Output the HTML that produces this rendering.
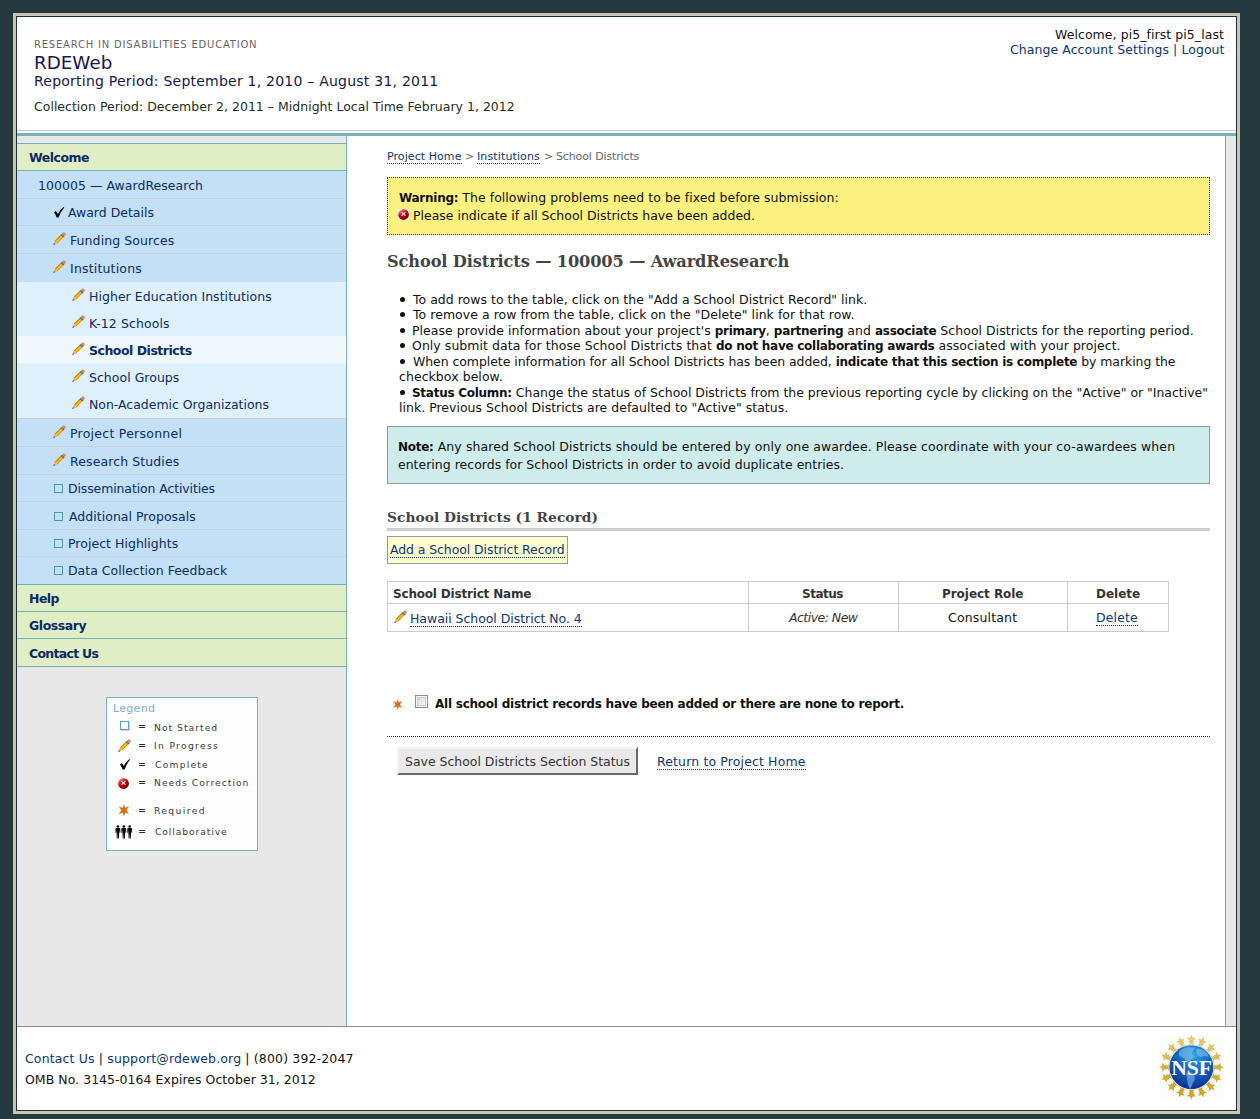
<!DOCTYPE html>
<html lang="en">
<head>
<meta charset="utf-8">
<title>RDEWeb - School Districts</title>
<style>
html,body{margin:0;padding:0;}
body{width:1260px;height:1119px;background:#26393f;position:relative;overflow:hidden;
 font-family:"DejaVu Sans","Liberation Sans",sans-serif;font-size:12.47px;color:#111;}
a{color:#0d3572;text-decoration:none;}
a.d{border-bottom:1px dotted #0d3572;}
b{font-size:12px;letter-spacing:-0.27px;font-weight:bold;}
h1,h2{margin:0;padding:0;}
#frame{position:absolute;left:13px;top:13px;width:1227px;height:1101px;background:#c8c5b0;}
#frame2{position:absolute;left:16px;top:16px;width:1221px;height:1095px;background:#1d2f36;}
#page{position:absolute;left:17px;top:17px;width:1219px;height:1093px;background:#fff;overflow:hidden;}
.abs{position:absolute;white-space:pre;margin:0;}
.ic,.bx{position:absolute;}
#hline{position:absolute;left:0;top:113px;width:1219px;height:1px;background:#c8c6c6;}
#hteal{position:absolute;left:0;top:116px;width:1219px;height:3px;background:#76b2b5;}
#side{position:absolute;left:0;top:119px;width:329px;height:890px;background:#e8e8e8;border-right:1px solid #76b2b5;}
.row{position:absolute;left:0;width:329px;box-sizing:border-box;}
.g{background:#dfeec5;border-bottom:1px solid #76b2b5;}
.bl{background:#c3e0f7;border-bottom:1px solid #c9cfd2;}
.bl.nb{border-bottom:none;}
.bl.tb{border-bottom:1px solid #76b2b5;}
.sb{background:#dff0fd;border-bottom:1px solid #c9cfd2;}
.hl{background:#eef8fd;}
#legend{position:absolute;background:#fdfdfd;border:1px solid #7ab5bd;}
#rbar{position:absolute;left:1208px;top:119px;width:11px;height:890px;background:#e8e8e8;border-left:1px solid #76b2b5;box-sizing:border-box;}
#fline{position:absolute;left:0;top:1009px;width:1219px;height:1px;background:#8a8a8a;}
#btn{background:#e9e9e9;border:2px solid;border-color:#f4f4f4 #6a6a6a #6a6a6a #f4f4f4;}

</style>
</head>
<body>
<div id="frame"></div><div id="frame2"></div>
<div id="page">
<!-- header -->
<div class="abs" style="left:17.00px;top:22.00px;color:#666;font-size:10px;line-height:12px;letter-spacing:0.788px;">RESEARCH IN DISABILITIES EDUCATION</div>
<div class="abs" style="left:17.00px;top:35.00px;color:#16164d;font-size:18.31px;line-height:22px;">RDEWeb</div>
<div class="abs" style="left:17.00px;top:56.00px;color:#16164d;font-size:14px;line-height:17px;letter-spacing:0.229px;">Reporting Period: September 1, 2010 – August 31, 2011</div>
<div class="abs" style="left:17.00px;top:82.00px;color:#1e2e22;font-size:12.47px;line-height:15px;letter-spacing:0.026px;">Collection Period: December 2, 2011 – Midnight Local Time February 1, 2012</div>
<div class="abs" style="left:1038.00px;top:10.00px;color:#111;font-size:12.47px;line-height:15px;letter-spacing:0.077px;">Welcome, pi5_first pi5_last</div>
<div class="abs" style="left:993.00px;top:25.00px;color:#0d3572;font-size:12.47px;line-height:15px;letter-spacing:0.081px;"><a>Change Account Settings</a> | <a>Logout</a></div>
<div id="hline"></div><div id="hteal"></div>
<!-- sidebar -->
<div id="side"></div>
<div class="row" style="top:126px;height:1px;background:#76b2b5"></div>
<div class="row g" style="top:127px;height:27px;"></div>
<div class="row bl" style="top:154px;height:28px;"></div>
<div class="row bl" style="top:182px;height:27px;"></div>
<div class="row bl" style="top:209px;height:28px;"></div>
<div class="row bl nb" style="top:237px;height:28px;"></div>
<div class="row sb" style="top:265px;height:137px;"></div>
<div class="row hl" style="top:319px;height:27px;"></div>
<div class="row bl" style="top:402px;height:28px;"></div>
<div class="row bl" style="top:430px;height:28px;"></div>
<div class="row bl" style="top:458px;height:27px;"></div>
<div class="row bl" style="top:485px;height:28px;"></div>
<div class="row bl" style="top:513px;height:27px;"></div>
<div class="row bl tb" style="top:540px;height:28px;"></div>
<div class="row g" style="top:568px;height:27px;"></div>
<div class="row g" style="top:595px;height:27px;"></div>
<div class="row g" style="top:622px;height:28px;"></div>
<div class="abs" style="left:12.00px;top:133.00px;color:#0b2a63;font-size:12.47px;line-height:15px;font-weight:bold;letter-spacing:-0.500px;">Welcome</div>
<div class="abs" style="left:21.00px;top:161.00px;color:#0b2a63;font-size:12.47px;line-height:15px;letter-spacing:0.052px;">100005 — AwardResearch</div>
<svg class="ic" style="left:37px;top:190px" width="11" height="11" viewBox="0 0 11 11"><path d="M0 5.4 L1.9 4 Q3 5.4 3.8 6.9 Q6 2.5 9.7 0 L10.3 0.6 Q6.8 4.4 4.6 10.4 L2.6 10.4 Q1.8 7.6 0 5.4 Z" fill="#0a0a0a"/></svg>
<div class="abs" style="left:51.00px;top:188.00px;color:#0b2a63;font-size:12.47px;line-height:15px;">Award Details</div>
<svg class="ic" style="left:36px;top:215px" width="14" height="14" viewBox="0 0 14 14"><g transform="translate(0.2,13) rotate(-45)"><path d="M0 0 L4.2 -1.75 L4.2 1.75 Z" fill="#dcae8e"/><path d="M0 0 L2.1 -0.9 L2.1 0.9 Z" fill="#5e5852"/><rect x="4.2" y="-1.75" width="8.4" height="3.5" fill="#ffce14"/><rect x="4.2" y="-1.75" width="8.4" height="1.05" fill="#cc7510"/><rect x="4.2" y="0.75" width="8.4" height="1" fill="#e98f12"/><rect x="12.4" y="-1.75" width="1.8" height="3.5" fill="#2a6485"/><rect x="12.4" y="-0.6" width="1.8" height="1.1" fill="#5b9cc4"/><path d="M14.2 -1.75 L15.6 -1.75 Q16.9 -1.75 16.9 0 Q16.9 1.75 15.6 1.75 L14.2 1.75 Z" fill="#ee8057"/></g></svg>
<div class="abs" style="left:53.00px;top:216.00px;color:#0b2a63;font-size:12.47px;line-height:15px;letter-spacing:0.107px;">Funding Sources</div>
<svg class="ic" style="left:36px;top:243px" width="14" height="14" viewBox="0 0 14 14"><g transform="translate(0.2,13) rotate(-45)"><path d="M0 0 L4.2 -1.75 L4.2 1.75 Z" fill="#dcae8e"/><path d="M0 0 L2.1 -0.9 L2.1 0.9 Z" fill="#5e5852"/><rect x="4.2" y="-1.75" width="8.4" height="3.5" fill="#ffce14"/><rect x="4.2" y="-1.75" width="8.4" height="1.05" fill="#cc7510"/><rect x="4.2" y="0.75" width="8.4" height="1" fill="#e98f12"/><rect x="12.4" y="-1.75" width="1.8" height="3.5" fill="#2a6485"/><rect x="12.4" y="-0.6" width="1.8" height="1.1" fill="#5b9cc4"/><path d="M14.2 -1.75 L15.6 -1.75 Q16.9 -1.75 16.9 0 Q16.9 1.75 15.6 1.75 L14.2 1.75 Z" fill="#ee8057"/></g></svg>
<div class="abs" style="left:53.00px;top:244.00px;color:#0b2a63;font-size:12.47px;line-height:15px;letter-spacing:0.200px;">Institutions</div>
<svg class="ic" style="left:55px;top:271px" width="14" height="14" viewBox="0 0 14 14"><g transform="translate(0.2,13) rotate(-45)"><path d="M0 0 L4.2 -1.75 L4.2 1.75 Z" fill="#dcae8e"/><path d="M0 0 L2.1 -0.9 L2.1 0.9 Z" fill="#5e5852"/><rect x="4.2" y="-1.75" width="8.4" height="3.5" fill="#ffce14"/><rect x="4.2" y="-1.75" width="8.4" height="1.05" fill="#cc7510"/><rect x="4.2" y="0.75" width="8.4" height="1" fill="#e98f12"/><rect x="12.4" y="-1.75" width="1.8" height="3.5" fill="#2a6485"/><rect x="12.4" y="-0.6" width="1.8" height="1.1" fill="#5b9cc4"/><path d="M14.2 -1.75 L15.6 -1.75 Q16.9 -1.75 16.9 0 Q16.9 1.75 15.6 1.75 L14.2 1.75 Z" fill="#ee8057"/></g></svg>
<div class="abs" style="left:72.00px;top:272.00px;color:#0b2a63;font-size:12.47px;line-height:15px;letter-spacing:0.057px;">Higher Education Institutions</div>
<svg class="ic" style="left:55px;top:298px" width="14" height="14" viewBox="0 0 14 14"><g transform="translate(0.2,13) rotate(-45)"><path d="M0 0 L4.2 -1.75 L4.2 1.75 Z" fill="#dcae8e"/><path d="M0 0 L2.1 -0.9 L2.1 0.9 Z" fill="#5e5852"/><rect x="4.2" y="-1.75" width="8.4" height="3.5" fill="#ffce14"/><rect x="4.2" y="-1.75" width="8.4" height="1.05" fill="#cc7510"/><rect x="4.2" y="0.75" width="8.4" height="1" fill="#e98f12"/><rect x="12.4" y="-1.75" width="1.8" height="3.5" fill="#2a6485"/><rect x="12.4" y="-0.6" width="1.8" height="1.1" fill="#5b9cc4"/><path d="M14.2 -1.75 L15.6 -1.75 Q16.9 -1.75 16.9 0 Q16.9 1.75 15.6 1.75 L14.2 1.75 Z" fill="#ee8057"/></g></svg>
<div class="abs" style="left:72.00px;top:299.00px;color:#0b2a63;font-size:12.47px;line-height:15px;letter-spacing:0.136px;">K-12 Schools</div>
<svg class="ic" style="left:55px;top:325px" width="14" height="14" viewBox="0 0 14 14"><g transform="translate(0.2,13) rotate(-45)"><path d="M0 0 L4.2 -1.75 L4.2 1.75 Z" fill="#dcae8e"/><path d="M0 0 L2.1 -0.9 L2.1 0.9 Z" fill="#5e5852"/><rect x="4.2" y="-1.75" width="8.4" height="3.5" fill="#ffce14"/><rect x="4.2" y="-1.75" width="8.4" height="1.05" fill="#cc7510"/><rect x="4.2" y="0.75" width="8.4" height="1" fill="#e98f12"/><rect x="12.4" y="-1.75" width="1.8" height="3.5" fill="#2a6485"/><rect x="12.4" y="-0.6" width="1.8" height="1.1" fill="#5b9cc4"/><path d="M14.2 -1.75 L15.6 -1.75 Q16.9 -1.75 16.9 0 Q16.9 1.75 15.6 1.75 L14.2 1.75 Z" fill="#ee8057"/></g></svg>
<div class="abs" style="left:72.00px;top:326.00px;color:#0b2a63;font-size:12.47px;line-height:15px;font-weight:bold;letter-spacing:-0.467px;">School Districts</div>
<svg class="ic" style="left:55px;top:352px" width="14" height="14" viewBox="0 0 14 14"><g transform="translate(0.2,13) rotate(-45)"><path d="M0 0 L4.2 -1.75 L4.2 1.75 Z" fill="#dcae8e"/><path d="M0 0 L2.1 -0.9 L2.1 0.9 Z" fill="#5e5852"/><rect x="4.2" y="-1.75" width="8.4" height="3.5" fill="#ffce14"/><rect x="4.2" y="-1.75" width="8.4" height="1.05" fill="#cc7510"/><rect x="4.2" y="0.75" width="8.4" height="1" fill="#e98f12"/><rect x="12.4" y="-1.75" width="1.8" height="3.5" fill="#2a6485"/><rect x="12.4" y="-0.6" width="1.8" height="1.1" fill="#5b9cc4"/><path d="M14.2 -1.75 L15.6 -1.75 Q16.9 -1.75 16.9 0 Q16.9 1.75 15.6 1.75 L14.2 1.75 Z" fill="#ee8057"/></g></svg>
<div class="abs" style="left:72.00px;top:353.00px;color:#0b2a63;font-size:12.47px;line-height:15px;letter-spacing:0.042px;">School Groups</div>
<svg class="ic" style="left:55px;top:379px" width="14" height="14" viewBox="0 0 14 14"><g transform="translate(0.2,13) rotate(-45)"><path d="M0 0 L4.2 -1.75 L4.2 1.75 Z" fill="#dcae8e"/><path d="M0 0 L2.1 -0.9 L2.1 0.9 Z" fill="#5e5852"/><rect x="4.2" y="-1.75" width="8.4" height="3.5" fill="#ffce14"/><rect x="4.2" y="-1.75" width="8.4" height="1.05" fill="#cc7510"/><rect x="4.2" y="0.75" width="8.4" height="1" fill="#e98f12"/><rect x="12.4" y="-1.75" width="1.8" height="3.5" fill="#2a6485"/><rect x="12.4" y="-0.6" width="1.8" height="1.1" fill="#5b9cc4"/><path d="M14.2 -1.75 L15.6 -1.75 Q16.9 -1.75 16.9 0 Q16.9 1.75 15.6 1.75 L14.2 1.75 Z" fill="#ee8057"/></g></svg>
<div class="abs" style="left:72.00px;top:380.00px;color:#0b2a63;font-size:12.47px;line-height:15px;letter-spacing:-0.008px;">Non-Academic Organizations</div>
<svg class="ic" style="left:36px;top:408px" width="14" height="14" viewBox="0 0 14 14"><g transform="translate(0.2,13) rotate(-45)"><path d="M0 0 L4.2 -1.75 L4.2 1.75 Z" fill="#dcae8e"/><path d="M0 0 L2.1 -0.9 L2.1 0.9 Z" fill="#5e5852"/><rect x="4.2" y="-1.75" width="8.4" height="3.5" fill="#ffce14"/><rect x="4.2" y="-1.75" width="8.4" height="1.05" fill="#cc7510"/><rect x="4.2" y="0.75" width="8.4" height="1" fill="#e98f12"/><rect x="12.4" y="-1.75" width="1.8" height="3.5" fill="#2a6485"/><rect x="12.4" y="-0.6" width="1.8" height="1.1" fill="#5b9cc4"/><path d="M14.2 -1.75 L15.6 -1.75 Q16.9 -1.75 16.9 0 Q16.9 1.75 15.6 1.75 L14.2 1.75 Z" fill="#ee8057"/></g></svg>
<div class="abs" style="left:53.00px;top:409.00px;color:#0b2a63;font-size:12.47px;line-height:15px;letter-spacing:0.275px;">Project Personnel</div>
<svg class="ic" style="left:36px;top:436px" width="14" height="14" viewBox="0 0 14 14"><g transform="translate(0.2,13) rotate(-45)"><path d="M0 0 L4.2 -1.75 L4.2 1.75 Z" fill="#dcae8e"/><path d="M0 0 L2.1 -0.9 L2.1 0.9 Z" fill="#5e5852"/><rect x="4.2" y="-1.75" width="8.4" height="3.5" fill="#ffce14"/><rect x="4.2" y="-1.75" width="8.4" height="1.05" fill="#cc7510"/><rect x="4.2" y="0.75" width="8.4" height="1" fill="#e98f12"/><rect x="12.4" y="-1.75" width="1.8" height="3.5" fill="#2a6485"/><rect x="12.4" y="-0.6" width="1.8" height="1.1" fill="#5b9cc4"/><path d="M14.2 -1.75 L15.6 -1.75 Q16.9 -1.75 16.9 0 Q16.9 1.75 15.6 1.75 L14.2 1.75 Z" fill="#ee8057"/></g></svg>
<div class="abs" style="left:53.00px;top:437.00px;color:#0b2a63;font-size:12.47px;line-height:15px;letter-spacing:0.120px;">Research Studies</div>
<div class="ic" style="left:37px;top:467px;width:7px;height:7px;border:1px solid #4c9aa0;"></div>
<div class="abs" style="left:51.00px;top:464.00px;color:#0b2a63;font-size:12.47px;line-height:15px;letter-spacing:-0.109px;">Dissemination Activities</div>
<div class="ic" style="left:37px;top:495px;width:7px;height:7px;border:1px solid #4c9aa0;"></div>
<div class="abs" style="left:52.00px;top:492.00px;color:#0b2a63;font-size:12.47px;line-height:15px;letter-spacing:0.042px;">Additional Proposals</div>
<div class="ic" style="left:37px;top:522px;width:7px;height:7px;border:1px solid #4c9aa0;"></div>
<div class="abs" style="left:51.00px;top:519.00px;color:#0b2a63;font-size:12.47px;line-height:15px;letter-spacing:0.047px;">Project Highlights</div>
<div class="ic" style="left:37px;top:549px;width:7px;height:7px;border:1px solid #4c9aa0;"></div>
<div class="abs" style="left:51.00px;top:546.00px;color:#0b2a63;font-size:12.47px;line-height:15px;letter-spacing:0.017px;">Data Collection Feedback</div>
<div class="abs" style="left:12.00px;top:574.00px;color:#0b2a63;font-size:12.47px;line-height:15px;font-weight:bold;letter-spacing:-0.533px;">Help</div>
<div class="abs" style="left:12.00px;top:601.00px;color:#0b2a63;font-size:12.47px;line-height:15px;font-weight:bold;letter-spacing:-0.429px;">Glossary</div>
<div class="abs" style="left:12.00px;top:629.00px;color:#0b2a63;font-size:12.47px;line-height:15px;font-weight:bold;letter-spacing:-0.700px;">Contact Us</div>
<div id="legend" style="left:89px;top:680px;width:150px;height:152px"></div>
<div class="abs" style="left:96.00px;top:685.00px;color:#7fb1d1;font-size:11px;line-height:13px;letter-spacing:0.300px;">Legend</div>
<div class="ic" style="left:103px;top:704px;width:7px;height:7px;border:1px solid #5aa0b8;box-shadow:1px 1px 0 #d4d4d4"></div>
<svg class="ic" style="left:101px;top:722px" width="14" height="14" viewBox="0 0 14 14"><g transform="translate(0.2,13) rotate(-45)"><path d="M0 0 L4.2 -1.75 L4.2 1.75 Z" fill="#dcae8e"/><path d="M0 0 L2.1 -0.9 L2.1 0.9 Z" fill="#5e5852"/><rect x="4.2" y="-1.75" width="8.4" height="3.5" fill="#ffce14"/><rect x="4.2" y="-1.75" width="8.4" height="1.05" fill="#cc7510"/><rect x="4.2" y="0.75" width="8.4" height="1" fill="#e98f12"/><rect x="12.4" y="-1.75" width="1.8" height="3.5" fill="#2a6485"/><rect x="12.4" y="-0.6" width="1.8" height="1.1" fill="#5b9cc4"/><path d="M14.2 -1.75 L15.6 -1.75 Q16.9 -1.75 16.9 0 Q16.9 1.75 15.6 1.75 L14.2 1.75 Z" fill="#ee8057"/></g></svg>
<svg class="ic" style="left:102.5px;top:742px" width="11" height="11" viewBox="0 0 11 11"><path d="M0 5.4 L1.9 4 Q3 5.4 3.8 6.9 Q6 2.5 9.7 0 L10.3 0.6 Q6.8 4.4 4.6 10.4 L2.6 10.4 Q1.8 7.6 0 5.4 Z" fill="#0a0a0a"/></svg>
<svg class="ic" style="left:101px;top:761px" width="11" height="11" viewBox="0 0 11 11"><defs><linearGradient id="eg1" x1="0.15" y1="0.1" x2="0.8" y2="0.95"><stop offset="0" stop-color="#ee8f9a"/><stop offset="0.4" stop-color="#d00606"/><stop offset="0.7" stop-color="#a80000"/><stop offset="1" stop-color="#3c0000"/></linearGradient></defs><rect width="11" height="11" fill="#fdfdfd"/><circle cx="5.5" cy="5.5" r="5.4" fill="url(#eg1)"/><path d="M3.9 3.3 L7.1 6.3 M7.1 3.3 L3.9 6.3" stroke="#f6e4e4" stroke-width="1.15" stroke-linecap="round"/></svg>
<svg class="ic" style="left:100.5px;top:787.3px" width="11.8" height="12.6" viewBox="0 0 10 11.6"><path d="M5 0 L6.1 3.7 L9.9 2 L7.3 5.8 L9.9 9.4 L6.1 7.9 L5 11.6 L3.9 7.9 L0.1 9.4 L2.7 5.8 L0.1 2 L3.9 3.7 Z" fill="#e06c0c"/></svg>
<svg class="ic" style="left:98px;top:808px" width="18" height="14" viewBox="0 0 18 14"><g fill="#0a0a0a"><g id="pp"><circle cx="2.9" cy="1.5" r="1.3"/><path d="M0.5 3.9 Q0.5 3.1 1.3 3.1 L4.5 3.1 Q5.3 3.1 5.3 3.9 L5.3 7.8 L4.6 7.8 L4.4 4.6 L4.2 8.2 L3.95 13.5 L3.1 13.5 L2.95 8.6 L2.85 8.6 L2.7 13.5 L1.85 13.5 L1.6 8.2 L1.4 4.6 L1.2 7.8 L0.5 7.8 Z"/></g><use href="#pp" x="5.9"/><use href="#pp" x="11.8"/></g></svg>
<div class="abs" style="left:121.00px;top:704.00px;color:#2a2a2a;font-size:9.6px;line-height:12px;">=</div>
<div class="abs" style="left:137.00px;top:705.00px;color:#3c3c3c;font-size:9.2px;line-height:11px;letter-spacing:1.020px;">Not Started</div>
<div class="abs" style="left:121.00px;top:723.00px;color:#2a2a2a;font-size:9.6px;line-height:12px;">=</div>
<div class="abs" style="left:137.00px;top:723.00px;color:#3c3c3c;font-size:9.2px;line-height:11px;letter-spacing:1.320px;">In Progress</div>
<div class="abs" style="left:121.00px;top:742.00px;color:#2a2a2a;font-size:9.6px;line-height:12px;">=</div>
<div class="abs" style="left:138.00px;top:742.00px;color:#3c3c3c;font-size:9.2px;line-height:11px;letter-spacing:1.214px;">Complete</div>
<div class="abs" style="left:121.00px;top:760.00px;color:#2a2a2a;font-size:9.6px;line-height:12px;">=</div>
<div class="abs" style="left:137.00px;top:760.00px;color:#3c3c3c;font-size:9.2px;line-height:11px;letter-spacing:1.013px;">Needs Correction</div>
<div class="abs" style="left:121.00px;top:788.00px;color:#2a2a2a;font-size:9.6px;line-height:12px;">=</div>
<div class="abs" style="left:137.00px;top:788.00px;color:#3c3c3c;font-size:9.2px;line-height:11px;letter-spacing:1.371px;">Required</div>
<div class="abs" style="left:121.00px;top:809.00px;color:#2a2a2a;font-size:9.6px;line-height:12px;">=</div>
<div class="abs" style="left:138.00px;top:809.00px;color:#3c3c3c;font-size:9.2px;line-height:11px;letter-spacing:0.900px;">Collaborative</div>
<!-- content -->
<div id="rbar"></div>
<div class="abs" style="left:370.00px;top:133.00px;color:#0d3572;font-size:11px;line-height:13px;letter-spacing:0.073px;"><a class="d">Project Home</a></div>
<div class="abs" style="left:448.00px;top:133.00px;color:#666;font-size:11px;line-height:13px;">&gt;</div>
<div class="abs" style="left:460.00px;top:133.00px;color:#0d3572;font-size:11px;line-height:13px;letter-spacing:0.127px;"><a class="d">Institutions</a></div>
<div class="abs" style="left:527.00px;top:133.00px;color:#666;font-size:11px;line-height:13px;">&gt;</div>
<div class="abs" style="left:539.00px;top:133.00px;color:#666;font-size:11px;line-height:13px;letter-spacing:-0.127px;">School Districts</div>
<div class="bx" style="left:370px;top:160px;width:821px;height:56px;background:#fdf17f;border:1px dotted #333"></div>
<div class="abs" style="left:382.00px;top:173.00px;color:#111;font-size:12.47px;line-height:15px;letter-spacing:0.060px;"><b>Warning:</b> The following problems need to be fixed before submission:</div>
<svg class="ic" style="left:381px;top:192px" width="11" height="11" viewBox="0 0 11 11"><defs><linearGradient id="eg2" x1="0.15" y1="0.1" x2="0.8" y2="0.95"><stop offset="0" stop-color="#ee8f9a"/><stop offset="0.4" stop-color="#d00606"/><stop offset="0.7" stop-color="#a80000"/><stop offset="1" stop-color="#3c0000"/></linearGradient></defs><rect width="11" height="11" fill="#fff"/><circle cx="5.5" cy="5.5" r="5.4" fill="url(#eg2)"/><path d="M3.9 3.3 L7.1 6.3 M7.1 3.3 L3.9 6.3" stroke="#f6e4e4" stroke-width="1.15" stroke-linecap="round"/></svg>
<div class="abs" style="left:396.00px;top:191.00px;color:#111;font-size:12.47px;line-height:15px;letter-spacing:0.002px;">Please indicate if all School Districts have been added.</div>
<h1 class="abs" style="left:370.00px;top:235.00px;color:#444;font-family:'DejaVu Serif','Liberation Serif',serif;font-size:16.2px;line-height:19px;font-weight:bold;letter-spacing:-0.120px;">School Districts — 100005 — AwardResearch</h1>
<div class="ic" style="left:382.5px;top:280px;width:5px;height:5px;border-radius:50%;background:#111"></div>
<div class="abs" style="left:396.00px;top:275.00px;color:#111;font-size:12.47px;line-height:15px;letter-spacing:0.028px;">To add rows to the table, click on the &quot;Add a School District Record&quot; link.</div>
<div class="ic" style="left:382.5px;top:295px;width:5px;height:5px;border-radius:50%;background:#111"></div>
<div class="abs" style="left:396.00px;top:290.00px;color:#111;font-size:12.47px;line-height:15px;letter-spacing:0.054px;">To remove a row from the table, click on the &quot;Delete&quot; link for that row.</div>
<div class="ic" style="left:382.5px;top:311px;width:5px;height:5px;border-radius:50%;background:#111"></div>
<div class="abs" style="left:395.00px;top:306.00px;color:#111;font-size:12.47px;line-height:15px;letter-spacing:0.051px;">Please provide information about your project's <b>primary</b>, <b>partnering</b> and <b>associate</b> School Districts for the reporting period.</div>
<div class="ic" style="left:382.5px;top:326px;width:5px;height:5px;border-radius:50%;background:#111"></div>
<div class="abs" style="left:395.00px;top:321.00px;color:#111;font-size:12.47px;line-height:15px;letter-spacing:0.063px;">Only submit data for those School Districts that <b>do not have collaborating awards</b> associated with your project.</div>
<div class="ic" style="left:382.5px;top:342px;width:5px;height:5px;border-radius:50%;background:#111"></div>
<div class="abs" style="left:396.00px;top:337.00px;color:#111;font-size:12.47px;line-height:15px;letter-spacing:-0.054px;">When complete information for all School Districts has been added, <b>indicate that this section is complete</b> by marking the</div>
<div class="abs" style="left:382.00px;top:352.00px;color:#111;font-size:12.47px;line-height:15px;letter-spacing:0.071px;">checkbox below.</div>
<div class="ic" style="left:382.5px;top:373px;width:5px;height:5px;border-radius:50%;background:#111"></div>
<div class="abs" style="left:395.00px;top:368.00px;color:#111;font-size:12.47px;line-height:15px;letter-spacing:-0.009px;"><b>Status Column:</b> Change the status of School Districts from the previous reporting cycle by clicking on the &quot;Active&quot; or &quot;Inactive&quot;</div>
<div class="abs" style="left:382.00px;top:383.00px;color:#111;font-size:12.47px;line-height:15px;letter-spacing:0.025px;">link. Previous School Districts are defaulted to &quot;Active&quot; status.</div>
<div class="bx" style="left:370px;top:409px;width:821px;height:56px;background:#cdeceb;border:1px solid #999"></div>
<div class="abs" style="left:381.00px;top:422.00px;color:#111;font-size:12.47px;line-height:15px;letter-spacing:0.114px;"><b>Note:</b> Any shared School Districts should be entered by only one awardee. Please coordinate with your co-awardees when</div>
<div class="abs" style="left:381.00px;top:440.00px;color:#111;font-size:12.47px;line-height:15px;letter-spacing:0.022px;">entering records for School Districts in order to avoid duplicate entries.</div>
<h2 class="abs" style="left:370.00px;top:492.00px;color:#444;font-family:'DejaVu Serif','Liberation Serif',serif;font-size:13.8px;line-height:17px;font-weight:bold;letter-spacing:0.031px;">School Districts (1 Record)</h2>
<div class="bx" style="left:370px;top:511px;width:823px;height:3px;background:#ccc"></div>
<div class="bx" style="left:370px;top:519px;width:179px;height:26px;background:#ffffd2;border:1px solid #999"></div>
<div class="abs" style="left:373.00px;top:525.00px;color:#0d3572;font-size:12.47px;line-height:15px;letter-spacing:-0.078px;"><a class="d">Add a School District Record</a></div>
<div class="bx" style="left:370px;top:564px;width:780px;height:49px;border:1px solid #ccc;background:#fff"></div>
<div class="bx" style="left:371px;top:586px;width:780px;height:1px;background:#ccc"></div>
<div class="bx" style="left:731px;top:565px;width:1px;height:49px;background:#ccc"></div>
<div class="bx" style="left:881px;top:565px;width:1px;height:49px;background:#ccc"></div>
<div class="bx" style="left:1050px;top:565px;width:1px;height:49px;background:#ccc"></div>
<div class="abs" style="left:376.00px;top:570.00px;color:#333;font-size:12px;line-height:14px;font-weight:bold;letter-spacing:-0.184px;">School District Name</div>
<div class="abs" style="left:785.00px;top:570.00px;color:#333;font-size:12px;line-height:14px;font-weight:bold;letter-spacing:-0.500px;">Status</div>
<div class="abs" style="left:925.00px;top:570.00px;color:#333;font-size:12px;line-height:14px;font-weight:bold;letter-spacing:-0.045px;">Project Role</div>
<div class="abs" style="left:1079.00px;top:570.00px;color:#333;font-size:12px;line-height:14px;font-weight:bold;">Delete</div>
<svg class="ic" style="left:376.5px;top:593px" width="14" height="14" viewBox="0 0 14 14"><g transform="translate(0.2,13) rotate(-45)"><path d="M0 0 L4.2 -1.75 L4.2 1.75 Z" fill="#dcae8e"/><path d="M0 0 L2.1 -0.9 L2.1 0.9 Z" fill="#5e5852"/><rect x="4.2" y="-1.75" width="8.4" height="3.5" fill="#ffce14"/><rect x="4.2" y="-1.75" width="8.4" height="1.05" fill="#cc7510"/><rect x="4.2" y="0.75" width="8.4" height="1" fill="#e98f12"/><rect x="12.4" y="-1.75" width="1.8" height="3.5" fill="#2a6485"/><rect x="12.4" y="-0.6" width="1.8" height="1.1" fill="#5b9cc4"/><path d="M14.2 -1.75 L15.6 -1.75 Q16.9 -1.75 16.9 0 Q16.9 1.75 15.6 1.75 L14.2 1.75 Z" fill="#ee8057"/></g></svg>
<div class="abs" style="left:393.00px;top:594.00px;color:#0d3572;font-size:12.47px;line-height:15px;letter-spacing:-0.026px;"><a class="d">Hawaii School District No. 4</a></div>
<div class="abs" style="left:772.00px;top:593.00px;color:#333;font-size:12.47px;line-height:15px;font-style:italic;letter-spacing:-0.510px;">Active: New</div>
<div class="abs" style="left:931.00px;top:593.00px;color:#111;font-size:12.47px;line-height:15px;letter-spacing:0.178px;">Consultant</div>
<div class="abs" style="left:1079.00px;top:593.00px;color:#0d3572;font-size:12.47px;line-height:15px;letter-spacing:0.160px;"><a class="d">Delete</a></div>
<svg class="ic" style="left:376px;top:682px" width="9.4" height="10.9" viewBox="0 0 10 11.6"><path d="M5 0 L6.1 3.7 L9.9 2 L7.3 5.8 L9.9 9.4 L6.1 7.9 L5 11.6 L3.9 7.9 L0.1 9.4 L2.7 5.8 L0.1 2 L3.9 3.7 Z" fill="#e06c0c"/></svg>
<div class="bx" style="left:398px;top:678px;width:11px;height:11px;border:1px solid #8a8e8e;background:#fff"><div style="position:absolute;left:1px;top:1px;width:7px;height:7px;border:1px solid #c6cad0;background:linear-gradient(135deg,#d3d7dd,#fbfbfb)"></div></div>
<div class="abs" style="left:418.00px;top:680.00px;color:#111;font-size:12px;line-height:14px;font-weight:bold;letter-spacing:-0.235px;">All school district records have been added or there are none to report.</div>
<div class="bx" style="left:370px;top:719px;width:823px;height:0;border-top:1px dotted #333"></div>
<div class="bx" id="btn" style="left:380px;top:730px;width:237px;height:24px"></div>
<div class="abs" style="left:388.00px;top:737.00px;color:#333;font-size:12.47px;line-height:15px;letter-spacing:-0.006px;">Save School Districts Section Status</div>
<div class="abs" style="left:640.00px;top:737.00px;color:#0d3572;font-size:12.47px;line-height:15px;letter-spacing:0.148px;"><a class="d">Return to Project Home</a></div>
<!-- footer -->
<div id="fline"></div>
<div class="abs" style="left:8.00px;top:1034.00px;color:#111;font-size:12.47px;line-height:15px;letter-spacing:0.160px;"><a>Contact Us</a> | <a>support@rdeweb.org</a> | (800) 392-2047</div>
<div class="abs" style="left:8.00px;top:1055.00px;color:#111;font-size:12.47px;line-height:15px;letter-spacing:0.049px;">OMB No. 3145-0164 Expires October 31, 2012</div>
<svg class="ic" style="left:1142px;top:1018px" width="65" height="65" viewBox="0 0 65 65"><defs><radialGradient id="gl" cx="55%" cy="22%" r="80%"><stop offset="0" stop-color="#27a9e4"/><stop offset="0.45" stop-color="#1668c4"/><stop offset="1" stop-color="#0a2f8e"/></radialGradient><linearGradient id="gd" x1="0" y1="0" x2="0" y2="1"><stop offset="0" stop-color="#e3cc7c"/><stop offset="0.5" stop-color="#d2b347"/><stop offset="1" stop-color="#c7a326"/></linearGradient></defs><rect width="65" height="65" fill="#fbfbf7"/><circle cx="32.4" cy="32.2" r="24.4" fill="none" stroke="url(#gd)" stroke-width="3.4"/><path d="M32.40,-0.40 L33.69,2.82 L37.16,3.05 L34.49,5.28 L35.34,8.65 L32.40,6.80 L29.46,8.65 L30.31,5.28 L27.64,3.05 L31.11,2.82Z M44.88,2.08 L44.84,5.55 L47.95,7.09 L44.63,8.13 L44.13,11.56 L42.12,8.73 L38.70,9.31 L40.77,6.53 L39.16,3.45 L42.45,4.56Z M55.45,9.15 L54.09,12.34 L56.37,14.95 L52.91,14.64 L51.13,17.62 L50.36,14.24 L46.98,13.47 L49.96,11.69 L49.65,8.23 L52.26,10.51Z M62.52,19.72 L60.04,22.15 L61.15,25.44 L58.07,23.83 L55.29,25.90 L55.87,22.48 L53.04,20.47 L56.47,19.97 L57.51,16.65 L59.05,19.76Z M65.00,32.20 L61.78,33.49 L61.55,36.96 L59.32,34.29 L55.95,35.14 L57.80,32.20 L55.95,29.26 L59.32,30.11 L61.55,27.44 L61.78,30.91Z M62.52,44.68 L59.05,44.64 L57.51,47.75 L56.47,44.43 L53.04,43.93 L55.87,41.92 L55.29,38.50 L58.07,40.57 L61.15,38.96 L60.04,42.25Z M55.45,55.25 L52.26,53.89 L49.65,56.17 L49.96,52.71 L46.98,50.93 L50.36,50.16 L51.13,46.78 L52.91,49.76 L56.37,49.45 L54.09,52.06Z M44.88,62.32 L42.45,59.84 L39.16,60.95 L40.77,57.87 L38.70,55.09 L42.12,55.67 L44.13,52.84 L44.63,56.27 L47.95,57.31 L44.84,58.85Z M32.40,64.80 L31.11,61.58 L27.64,61.35 L30.31,59.12 L29.46,55.75 L32.40,57.60 L35.34,55.75 L34.49,59.12 L37.16,61.35 L33.69,61.58Z M19.92,62.32 L19.96,58.85 L16.85,57.31 L20.17,56.27 L20.67,52.84 L22.68,55.67 L26.10,55.09 L24.03,57.87 L25.64,60.95 L22.35,59.84Z M9.35,55.25 L10.71,52.06 L8.43,49.45 L11.89,49.76 L13.67,46.78 L14.44,50.16 L17.82,50.93 L14.84,52.71 L15.15,56.17 L12.54,53.89Z M2.28,44.68 L4.76,42.25 L3.65,38.96 L6.73,40.57 L9.51,38.50 L8.93,41.92 L11.76,43.93 L8.33,44.43 L7.29,47.75 L5.75,44.64Z M-0.20,32.20 L3.02,30.91 L3.25,27.44 L5.48,30.11 L8.85,29.26 L7.00,32.20 L8.85,35.14 L5.48,34.29 L3.25,36.96 L3.02,33.49Z M2.28,19.72 L5.75,19.76 L7.29,16.65 L8.33,19.97 L11.76,20.47 L8.93,22.48 L9.51,25.90 L6.73,23.83 L3.65,25.44 L4.76,22.15Z M9.35,9.15 L12.54,10.51 L15.15,8.23 L14.84,11.69 L17.82,13.47 L14.44,14.24 L13.67,17.62 L11.89,14.64 L8.43,14.95 L10.71,12.34Z M19.92,2.08 L22.35,4.56 L25.64,3.45 L24.03,6.53 L26.10,9.31 L22.68,8.73 L20.67,11.56 L20.17,8.13 L16.85,7.09 L19.96,5.55Z" fill="url(#gd)"/><g fill="#fdfdf8"><ellipse cx="37.18" cy="8.17" rx="3.1" ry="1.75" transform="rotate(11.2 37.18 8.17)"/><ellipse cx="46.01" cy="11.83" rx="3.1" ry="1.75" transform="rotate(33.8 46.01 11.83)"/><ellipse cx="52.77" cy="18.59" rx="3.1" ry="1.75" transform="rotate(56.2 52.77 18.59)"/><ellipse cx="56.43" cy="27.42" rx="3.1" ry="1.75" transform="rotate(78.8 56.43 27.42)"/><ellipse cx="56.43" cy="36.98" rx="3.1" ry="1.75" transform="rotate(101.2 56.43 36.98)"/><ellipse cx="52.77" cy="45.81" rx="3.1" ry="1.75" transform="rotate(123.7 52.77 45.81)"/><ellipse cx="46.01" cy="52.57" rx="3.1" ry="1.75" transform="rotate(146.2 46.01 52.57)"/><ellipse cx="37.18" cy="56.23" rx="3.1" ry="1.75" transform="rotate(168.8 37.18 56.23)"/><ellipse cx="27.62" cy="56.23" rx="3.1" ry="1.75" transform="rotate(191.2 27.62 56.23)"/><ellipse cx="18.79" cy="52.57" rx="3.1" ry="1.75" transform="rotate(213.8 18.79 52.57)"/><ellipse cx="12.03" cy="45.81" rx="3.1" ry="1.75" transform="rotate(236.2 12.03 45.81)"/><ellipse cx="8.37" cy="36.98" rx="3.1" ry="1.75" transform="rotate(258.8 8.37 36.98)"/><ellipse cx="8.37" cy="27.42" rx="3.1" ry="1.75" transform="rotate(281.2 8.37 27.42)"/><ellipse cx="12.03" cy="18.59" rx="3.1" ry="1.75" transform="rotate(303.8 12.03 18.59)"/><ellipse cx="18.79" cy="11.83" rx="3.1" ry="1.75" transform="rotate(326.2 18.79 11.83)"/><ellipse cx="27.62" cy="8.17" rx="3.1" ry="1.75" transform="rotate(348.8 27.62 8.17)"/></g><circle cx="32.4" cy="32.2" r="22" fill="url(#gl)"/><g fill="#8fc4ee" opacity="0.55"><path d="M20 17 Q24 12 31 12 L36 13 Q33 16 33 19 L36 22 Q32 24 30 27 L27 26 Q25 22 20 21 Z"/><path d="M37 14 Q43 13 48 18 L50 22 Q45 20 42 22 L38 20 Z"/><path d="M27 38 Q31 36 35 39 L36 44 Q33 50 31 55 L29 50 Q28 44 27 38 Z"/></g><text x="32.6" y="39.8" text-anchor="middle" font-family="'Liberation Serif','DejaVu Serif',serif" font-weight="bold" font-size="21.6" fill="#fff">NSF</text></svg>
</div>
</body>
</html>
